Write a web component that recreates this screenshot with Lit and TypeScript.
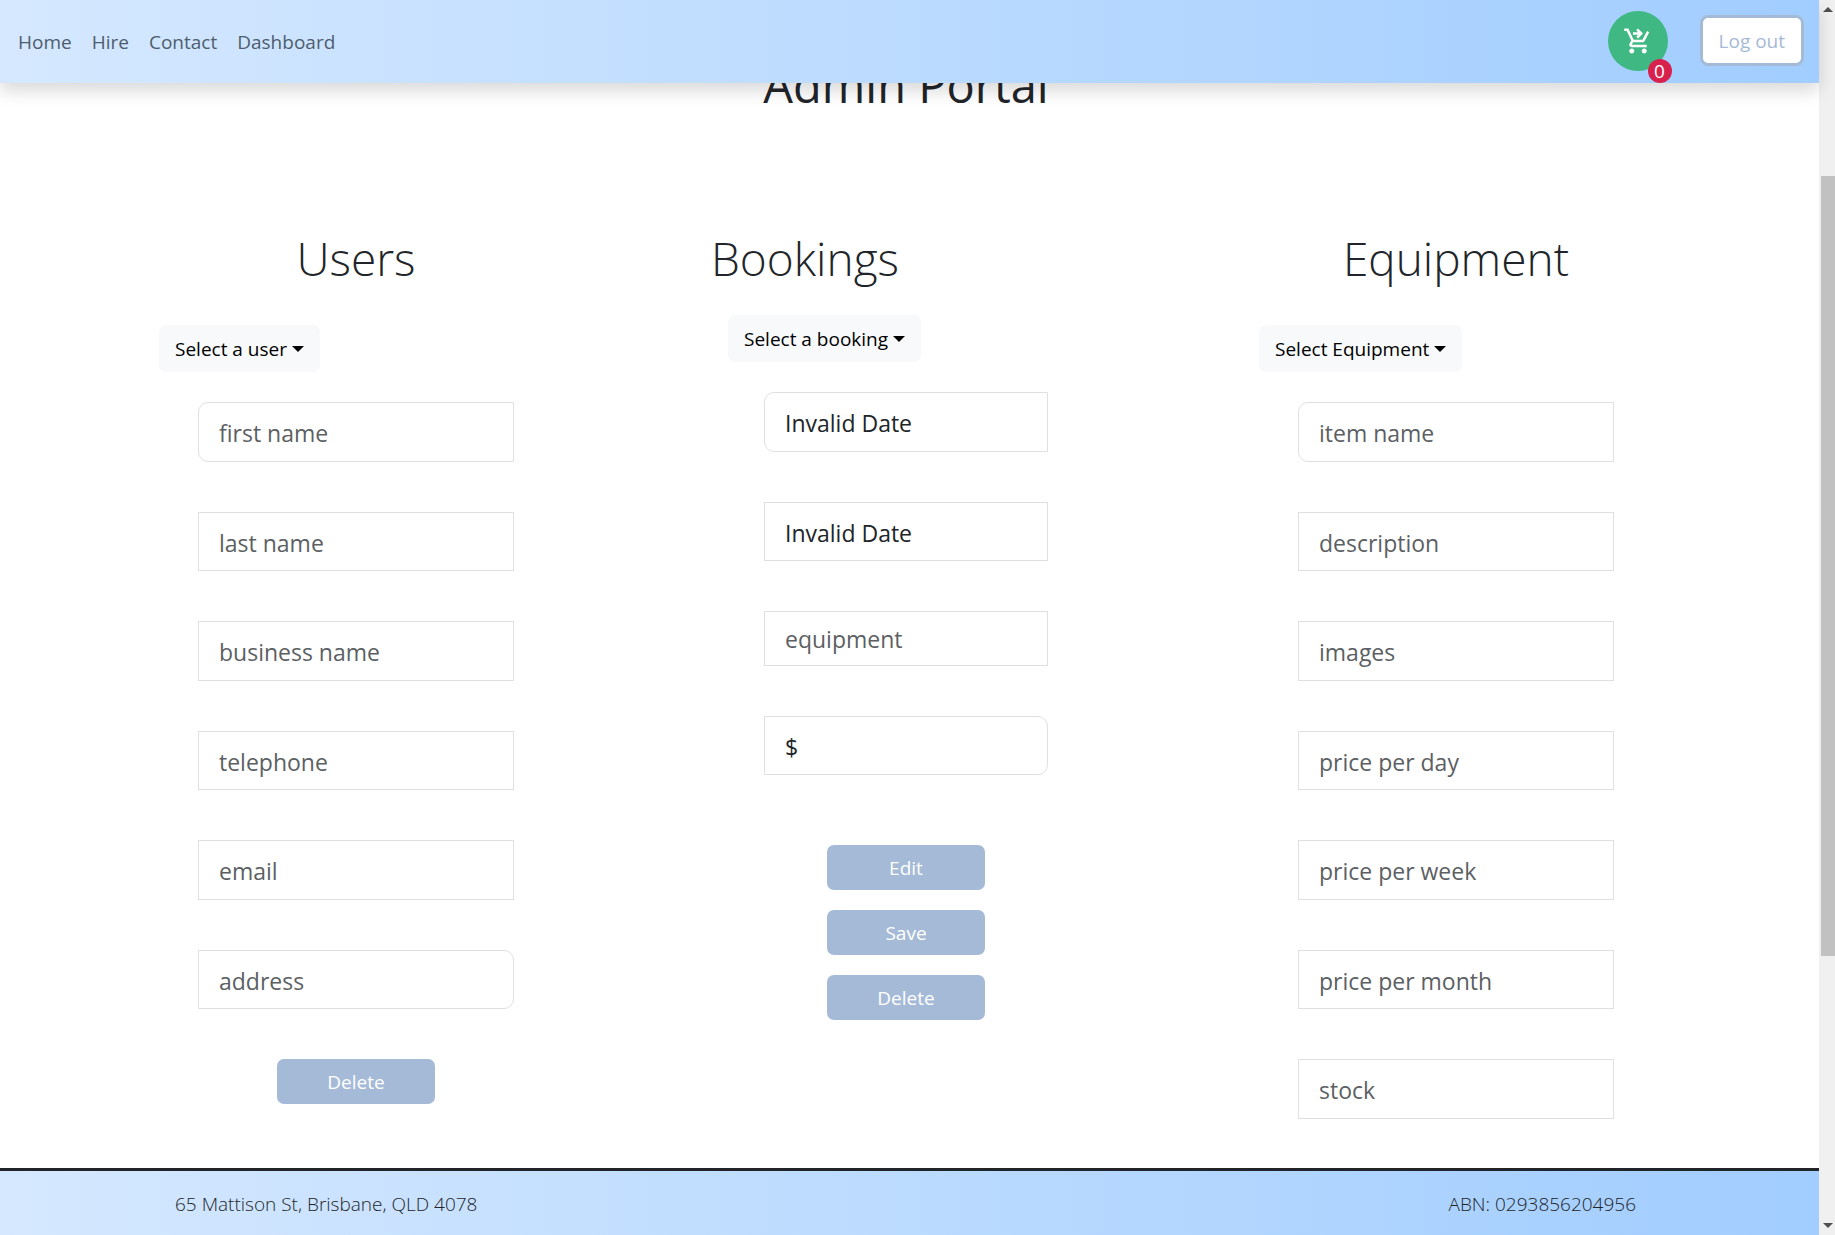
import { LitElement, html, css, svg } from "lit";
import { customElement, property } from "lit/decorators.js";
import { classMap } from "lit/directives/class-map.js";

const FONT = css`"Segoe UI", "Open Sans", "Noto Sans", sans-serif`;

interface Field {
  label: string;
  value?: string;
  compact?: boolean;
}

const caret = svg`<path d="M0 0h12L6 6z" fill="currentColor"></path>`;

@customElement("site-header")
export class SiteHeader extends LitElement {
  static styles = css`
    :host {
      display: block;
      font-family: ${FONT};
    }
    .bar {
      display: flex;
      align-items: flex-start;
      justify-content: space-between;
      height: 83px;
      box-sizing: border-box;
      padding: 0 15px 0 18px;
      background: linear-gradient(to right, #d5e8ff, #a1cdff);
      box-shadow: 0 8px 16px rgba(0, 0, 0, 0.15);
    }
    .links {
      display: flex;
      align-self: center;
      gap: 20px;
    }
    .links a {
      color: #4e5d6d;
      font-size: 19px;
      line-height: 30px;
      text-decoration: none;
    }
    .actions {
      display: flex;
      align-items: flex-start;
      gap: 32px;
    }
    .cart {
      position: relative;
      display: flex;
      align-items: center;
      justify-content: center;
      width: 60px;
      height: 60px;
      margin-top: 11px;
      padding: 0;
      border: 0;
      border-radius: 50%;
      background: #40b883;
      color: #fff;
      font-family: inherit;
    }
    .count {
      position: absolute;
      right: -4px;
      bottom: -12px;
      width: 24px;
      height: 24px;
      border-radius: 50%;
      background: #d9214e;
      font-size: 19px;
      font-weight: 500;
      line-height: 25px;
      text-align: center;
    }
    .logout {
      height: 51px;
      margin-top: 15px;
      padding: 0 16px;
      border: 3px solid #a5bad6;
      border-radius: 8px;
      background: #fff;
      color: #a5bad6;
      font-family: inherit;
      font-size: 19px;
    }
  `;

  render() {
    return html`
      <header class="bar">
        <nav class="links" aria-label="Main">
          ${["Home", "Hire", "Contact", "Dashboard"].map((t) => html`<a href="#${t.toLowerCase()}">${t}</a>`)}
        </nav>
        <div class="actions">
          <button class="cart" type="button" aria-label="Cart">
            <svg width="30" height="30" viewBox="0 0 24 24" fill="currentColor" aria-hidden="true">
              <path d="M7 18c-1.1 0-1.99.9-1.99 2S5.9 22 7 22s2-.9 2-2-.9-2-2-2zm10 0c-1.1 0-1.99.9-1.99 2s.89 2 1.99 2 2-.9 2-2-.9-2-2-2zm-8.9-5h7.45c.75 0 1.41-.41 1.75-1.03L21 4.96 19.25 4l-3.7 7H8.53L4.27 2H1v2h2l3.6 7.59-1.35 2.44C4.52 15.37 5.48 17 7 17h12v-2H7l1.1-2zM12 2l4 4-4 4-1.41-1.41L12.17 7H8V5h4.17l-1.59-1.59L12 2z"></path>
            </svg>
            <span class="count">0</span>
          </button>
          <button class="logout" type="button">Log out</button>
        </div>
      </header>
    `;
  }
}

@customElement("admin-panel")
export class AdminPanel extends LitElement {
  @property() heading = "";
  @property() picker = "";
  @property({ attribute: false }) fields: Field[] = [];
  @property({ attribute: false }) actions: string[] = [];
  @property({ type: Boolean, reflect: true }) narrow = false;

  static styles = css`
    :host {
      display: block;
      box-sizing: border-box;
      font-family: ${FONT};
      padding: 0 39px;
    }
    .title {
      margin: 0 0 35px;
      color: #212529;
      font-size: 46px;
      font-weight: 300;
      line-height: 64px;
      text-align: center;
    }
    .picker {
      display: flex;
      align-items: center;
      gap: 5px;
      height: 47px;
      margin: 0 0 30px -39px;
      padding: 0 16px;
      border: 0;
      border-radius: 7px;
      background: #f8f9fb;
      color: #000;
      font-family: inherit;
      font-size: 19px;
      white-space: nowrap;
    }
    .fields {
      display: flex;
      flex-direction: column;
      gap: 50px;
    }
    .field {
      box-sizing: border-box;
      width: 100%;
      margin: 0;
      padding: 13px 20px 10px;
      border: 1px solid #dee0e4;
      border-radius: 0;
      background: #fff;
      color: #212529;
      font-family: inherit;
      font-size: 23px;
      line-height: 1.5;
    }
    .field::placeholder {
      color: #5c5f63;
      opacity: 1;
    }
    .compact {
      padding: 10px 20px 8px;
    }
    .first {
      border-radius: 10px 0 0 10px;
    }
    .last {
      border-radius: 0 10px 10px 0;
    }
    .buttons {
      display: flex;
      flex-direction: column;
      align-items: center;
      gap: 20px;
      margin-top: 50px;
    }
    .action {
      width: 158px;
      height: 45px;
      padding: 0;
      border: 0;
      border-radius: 7px;
      background: #a5bad6;
      color: #fff;
      font-family: inherit;
      font-size: 19px;
    }
    :host([narrow]) {
      padding: 0 55px;
    }
    :host([narrow]) .title {
      margin: 0 0 25px -202px;
    }
    :host([narrow]) .picker {
      margin-left: -36px;
    }
    :host([narrow]) .buttons {
      margin-top: 70px;
    }
  `;

  render() {
    const last = this.fields.length - 1;
    return html`
      <section>
        <h2 class="title">${this.heading}</h2>
        <button class="picker" type="button" aria-haspopup="listbox">
          ${this.picker}
          <svg width="12" height="6" viewBox="0 0 12 6" aria-hidden="true">${caret}</svg>
        </button>
        <div class="fields">
          ${this.fields.map(
            (f, i) => html`<input
              class=${classMap({
                field: true,
                compact: !!f.compact,
                first: i === 0,
                last: i === last && this.actions.length > 0,
              })}
              type="text"
              aria-label=${f.label}
              placeholder=${f.label}
              .value=${f.value ?? ""}
            />`
          )}
        </div>
        ${this.actions.length
          ? html`<div class="buttons">
              ${this.actions.map((a) => html`<button class="action" type="button">${a}</button>`)}
            </div>`
          : null}
      </section>
    `;
  }
}

@customElement("app-root")
export class AppRoot extends LitElement {
  static styles = css`
    :host {
      display: flex;
      height: 100vh;
      overflow: hidden;
      background: #fff;
      color: #212529;
      font-family: ${FONT};
    }
    .page {
      position: relative;
      flex: 1;
      display: flex;
      flex-direction: column;
      min-width: 0;
    }
    .top {
      position: absolute;
      top: 0;
      left: 0;
      right: 0;
      z-index: 1;
    }
    .main {
      flex: 1;
      padding: 48px 166px 0 159px;
    }
    .heading {
      margin: 0 0 104px;
      font-size: 47px;
      font-weight: 400;
      line-height: 74px;
      text-align: center;
    }
    .panels {
      display: flex;
      justify-content: space-between;
      align-items: flex-start;
    }
    .panel {
      width: 394px;
    }
    .footer {
      display: flex;
      align-items: center;
      justify-content: space-between;
      height: 62px;
      padding: 2px 183px 0 175px;
      border-top: 3px solid #212529;
      background: linear-gradient(to right, #d5e8ff, #a1cdff);
      font-size: 19px;
      font-weight: 300;
      line-height: 28px;
    }
    .footer p {
      margin: 0;
    }
    .scroll {
      display: flex;
      flex-direction: column;
      align-items: center;
      width: 16px;
      box-sizing: border-box;
      padding: 7px 0 7px 2px;
      background: #f0f0f0;
      color: #505050;
    }
    .track {
      flex: 1;
      align-self: stretch;
      display: grid;
      grid-template-rows: 164fr 780fr 267fr;
    }
    .thumb {
      grid-row: 2;
      background: #c1c1c1;
    }
  `;

  private users: Field[] = ["first name", "last name", "business name", "telephone", "email", "address"].map(
    (label) => ({ label })
  );
  private bookings: Field[] = [
    { label: "start date", value: "Invalid Date" },
    { label: "end date", value: "Invalid Date" },
    { label: "equipment", compact: true },
    { label: "price", value: "$" },
  ];
  private equipment: Field[] = [
    "item name",
    "description",
    "images",
    "price per day",
    "price per week",
    "price per month",
    "stock",
  ].map((label) => ({ label }));

  render() {
    return html`
      <div class="page">
        <site-header class="top"></site-header>
        <main class="main">
          <h1 class="heading">Admin Portal</h1>
          <div class="panels">
            <admin-panel class="panel" heading="Users" picker="Select a user" .fields=${this.users} .actions=${["Delete"]}></admin-panel>
            <admin-panel class="panel" narrow heading="Bookings" picker="Select a booking" .fields=${this.bookings} .actions=${["Edit", "Save", "Delete"]}></admin-panel>
            <admin-panel class="panel" heading="Equipment" picker="Select Equipment" .fields=${this.equipment}></admin-panel>
          </div>
        </main>
        <footer class="footer">
          <p>65 Mattison St, Brisbane, QLD 4078</p>
          <p>ABN: 0293856204956</p>
        </footer>
      </div>
      <div class="scroll" aria-hidden="true">
        <svg width="10" height="5" viewBox="0 0 10 5"><path d="M0 5h10L5 0z" fill="currentColor"></path></svg>
        <div class="track"><div class="thumb"></div></div>
        <svg width="10" height="5" viewBox="0 0 10 5"><path d="M0 0h10L5 5z" fill="currentColor"></path></svg>
      </div>
    `;
  }
}
